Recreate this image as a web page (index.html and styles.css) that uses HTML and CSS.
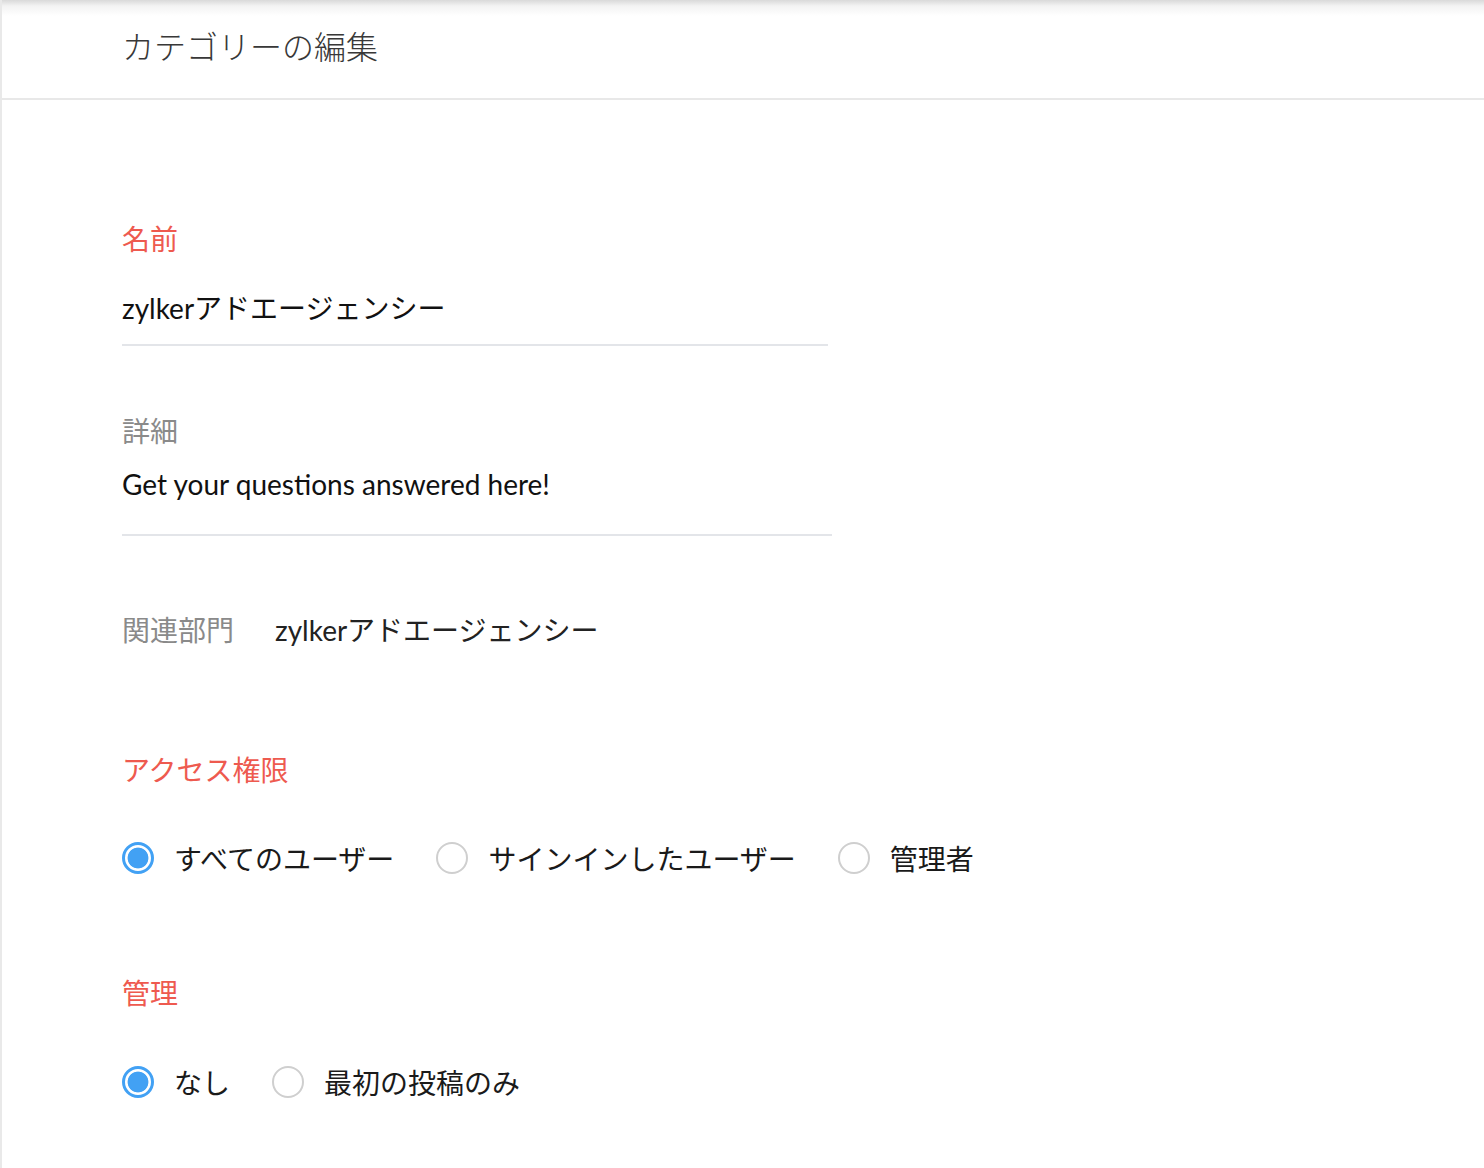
FILE: index.html
```html
<!DOCTYPE html>
<html lang="ja">
<head>
<meta charset="utf-8">
<title>カテゴリーの編集</title>
<link rel="stylesheet" href="styles.css">
</head>
<body>
<div class="page">
  <header class="header">
    <h1 class="title">カテゴリーの編集</h1>
  </header>
  <main class="form">
    <div class="label label-red label-name">名前</div>
    <div class="field field-name">
      <div class="value">zylkerアドエージェンシー</div>
    </div>

    <div class="label label-gray label-desc">詳細</div>
    <div class="field field-desc">
      <div class="value value-desc">Get your questions answered here!</div>
    </div>

    <div class="dept-row">
      <span class="label label-gray">関連部門</span>
      <span class="dept-value">zylkerアドエージェンシー</span>
    </div>

    <div class="label label-red label-access">アクセス権限</div>
    <div class="radio-row row-access">
      <label class="option"><span class="radio checked"></span><span class="opt-text">すべてのユーザー</span></label>
      <label class="option"><span class="radio"></span><span class="opt-text">サインインしたユーザー</span></label>
      <label class="option"><span class="radio"></span><span class="opt-text">管理者</span></label>
    </div>

    <div class="label label-red label-manage">管理</div>
    <div class="radio-row row-manage">
      <label class="option"><span class="radio checked"></span><span class="opt-text">なし</span></label>
      <label class="option"><span class="radio"></span><span class="opt-text">最初の投稿のみ</span></label>
    </div>
  </main>
</div>
</body>
</html>
```

FILE: styles.css
```css
html, body {
  margin: 0;
  padding: 0;
  background: #ffffff;
}

body {
  font-family: "Lato", "Noto Sans CJK JP", sans-serif;
  color: #1a1a1a;
}

.page {
  min-height: 1168px;
  border-left: 2px solid #e9e9e9;
  box-sizing: border-box;
}

.header {
  height: 100px;
  box-sizing: border-box;
  padding: 25px 0 0 120px;
  border-bottom: 2px solid #e8e8e8;
  background: linear-gradient(to bottom, #d9d9d9 0px, #f3f3f3 6px, #ffffff 16px);
}

.title {
  margin: 0;
  font-family: "Noto Sans CJK JP", sans-serif;
  font-weight: 300;
  font-size: 32px;
  line-height: 40px;
  color: #383838;
}

.form {
  padding-left: 120px;
}

.label {
  font-family: "Noto Sans CJK JP", sans-serif;
  font-weight: 400;
  font-size: 28px;
  line-height: 40px;
}

.label-red {
  color: #ee5a4f;
}

.label-gray {
  color: #8a8a8a;
}

.label-name {
  margin-top: 118px;
}

.field {
  border-bottom: 2px solid #e3e5e9;
}

.field-name {
  width: 706px;
  margin-top: 30px;
  padding-bottom: 16px;
}

.value {
  font-size: 28px;
  line-height: 40px;
  color: #111111;
}

.label-desc {
  margin-top: 64px;
}

.field-desc {
  width: 710px;
  margin-top: 14px;
  padding-bottom: 30px;
}

.value-desc {
  font-size: 28px;
}

.dept-row {
  margin-top: 73px;
  display: flex;
  align-items: center;
  gap: 41px;
  height: 40px;
}

.dept-value {
  font-size: 28px;
  line-height: 40px;
  padding-top: 2px;
  color: #222222;
}

.label-access {
  margin-top: 100px;
}

.radio-row {
  display: flex;
  align-items: center;
  height: 40px;
}

.row-access {
  margin-top: 49px;
}

.label-manage {
  margin-top: 94px;
}

.row-manage {
  margin-top: 50px;
}

.option {
  display: flex;
  align-items: center;
  gap: 20px;
  margin-right: 42px;
}

.radio {
  width: 32px;
  height: 32px;
  box-sizing: border-box;
  border-radius: 50%;
  border: 2px solid #cfcfcf;
  background: #ffffff;
  flex: none;
}

.radio.checked {
  border: 3px solid #42a1f4;
  background: radial-gradient(circle, #42a1f4 0, #42a1f4 10px, #ffffff 10.8px);
}

.opt-text {
  font-family: "Noto Sans CJK JP", sans-serif;
  font-size: 28px;
  line-height: 40px;
  color: #1a1a1a;
}
```
